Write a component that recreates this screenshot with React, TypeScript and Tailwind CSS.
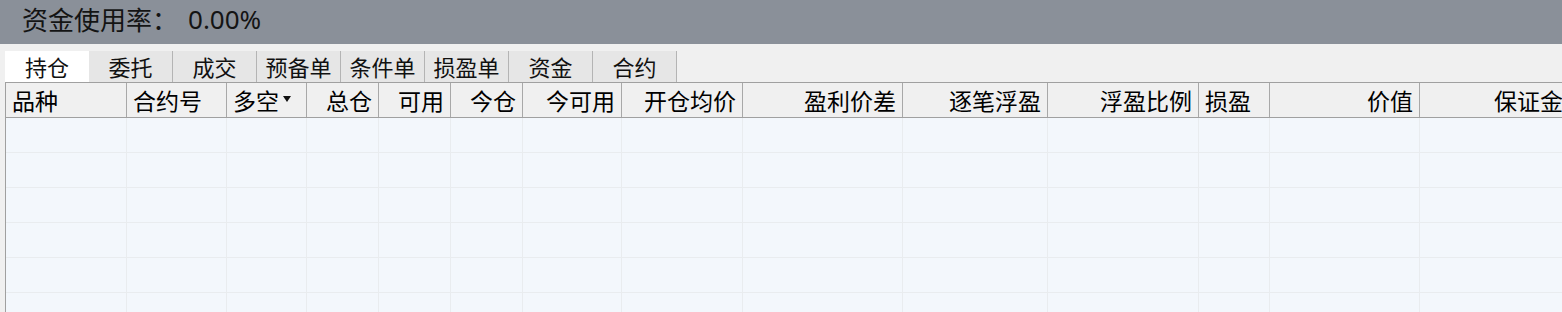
const tabs = ['持仓', '委托', '成交', '预备单', '条件单', '损盈单', '资金', '合约'];

type Col = { title: string; width: string; align: 'left' | 'right'; sort?: boolean };

const columns: Col[] = [
  { title: '品种', width: 'w-[121px]', align: 'left' },
  { title: '合约号', width: 'w-[100px]', align: 'left' },
  { title: '多空', width: 'w-[80px]', align: 'left', sort: true },
  { title: '总仓', width: 'w-[72px]', align: 'right' },
  { title: '可用', width: 'w-[72px]', align: 'right' },
  { title: '今仓', width: 'w-[72px]', align: 'right' },
  { title: '今可用', width: 'w-[99px]', align: 'right' },
  { title: '开仓均价', width: 'w-[121px]', align: 'right' },
  { title: '盈利价差', width: 'w-[160px]', align: 'right' },
  { title: '逐笔浮盈', width: 'w-[145px]', align: 'right' },
  { title: '浮盈比例', width: 'w-[151px]', align: 'right' },
  { title: '损盈', width: 'w-[71px]', align: 'left' },
  { title: '价值', width: 'w-[150px]', align: 'right' },
  { title: '保证金', width: 'w-[150px]', align: 'right' },
];

const rows = [0, 1, 2, 3, 4, 5];

export default function App() {
  return (
    <div
      className="w-[1562px] h-[312px] overflow-hidden bg-[#f0f0f0] text-[#111]"
      style={{ fontFamily: '"Noto Sans", "Noto Sans CJK SC", sans-serif' }}
    >
      {/* 顶部资金栏 */}
      <div className="h-[44px] bg-[#8a9099] flex items-start pl-[22px] pt-[1px] text-[26px] leading-[36px] text-[#141414]">
        <span style={{ fontFamily: '"Noto Sans CJK SC", sans-serif' }}>资金使用率：</span>
        <span className="ml-[10px]">0.00%</span>
      </div>

      {/* 标签页 */}
      <div className="flex pl-[5px] pt-[7px]">
        {tabs.map((tab, i) => (
          <div
            key={tab}
            className={`w-[84px] h-[31px] flex items-center justify-center text-[22px] leading-none ${
              i === 0 ? 'bg-white' : 'bg-[#e6e6e6] border-r border-[#b4b4b4]'
            }`}
          >
            {tab}
          </div>
        ))}
      </div>

      {/* 持仓表格 */}
      <div className="ml-[5px] h-[230px] border-l border-t border-[#a0a0a0] bg-[#f3f7fc]">
        <div className="flex h-[35px] bg-[#f0f0f0] border-b border-[#a0a0a0]">
          {columns.map((col) => (
            <div
              key={col.title}
              className={`${col.width} shrink-0 h-full flex items-center pt-[3px] text-[23px] leading-none text-black border-r border-[#a8a8a8] ${
                col.align === 'right' ? 'justify-end pr-[6px]' : 'justify-start pl-[6px]'
              }`}
            >
              <span>{col.title}</span>
              {col.sort && (
                <svg width="8" height="7" viewBox="0 0 8 7" className="ml-[4px] mb-[4px]">
                  <path d="M0 0 L8 0 L4 6 Z" fill="#111" />
                </svg>
              )}
            </div>
          ))}
        </div>
        {rows.map((r) => (
          <div key={r} className="flex h-[35px] border-b border-[#e9ecef]">
            {columns.map((col) => (
              <div key={col.title} className={`${col.width} shrink-0 h-full border-r border-[#e9ecef]`} />
            ))}
          </div>
        ))}
      </div>
    </div>
  );
}
